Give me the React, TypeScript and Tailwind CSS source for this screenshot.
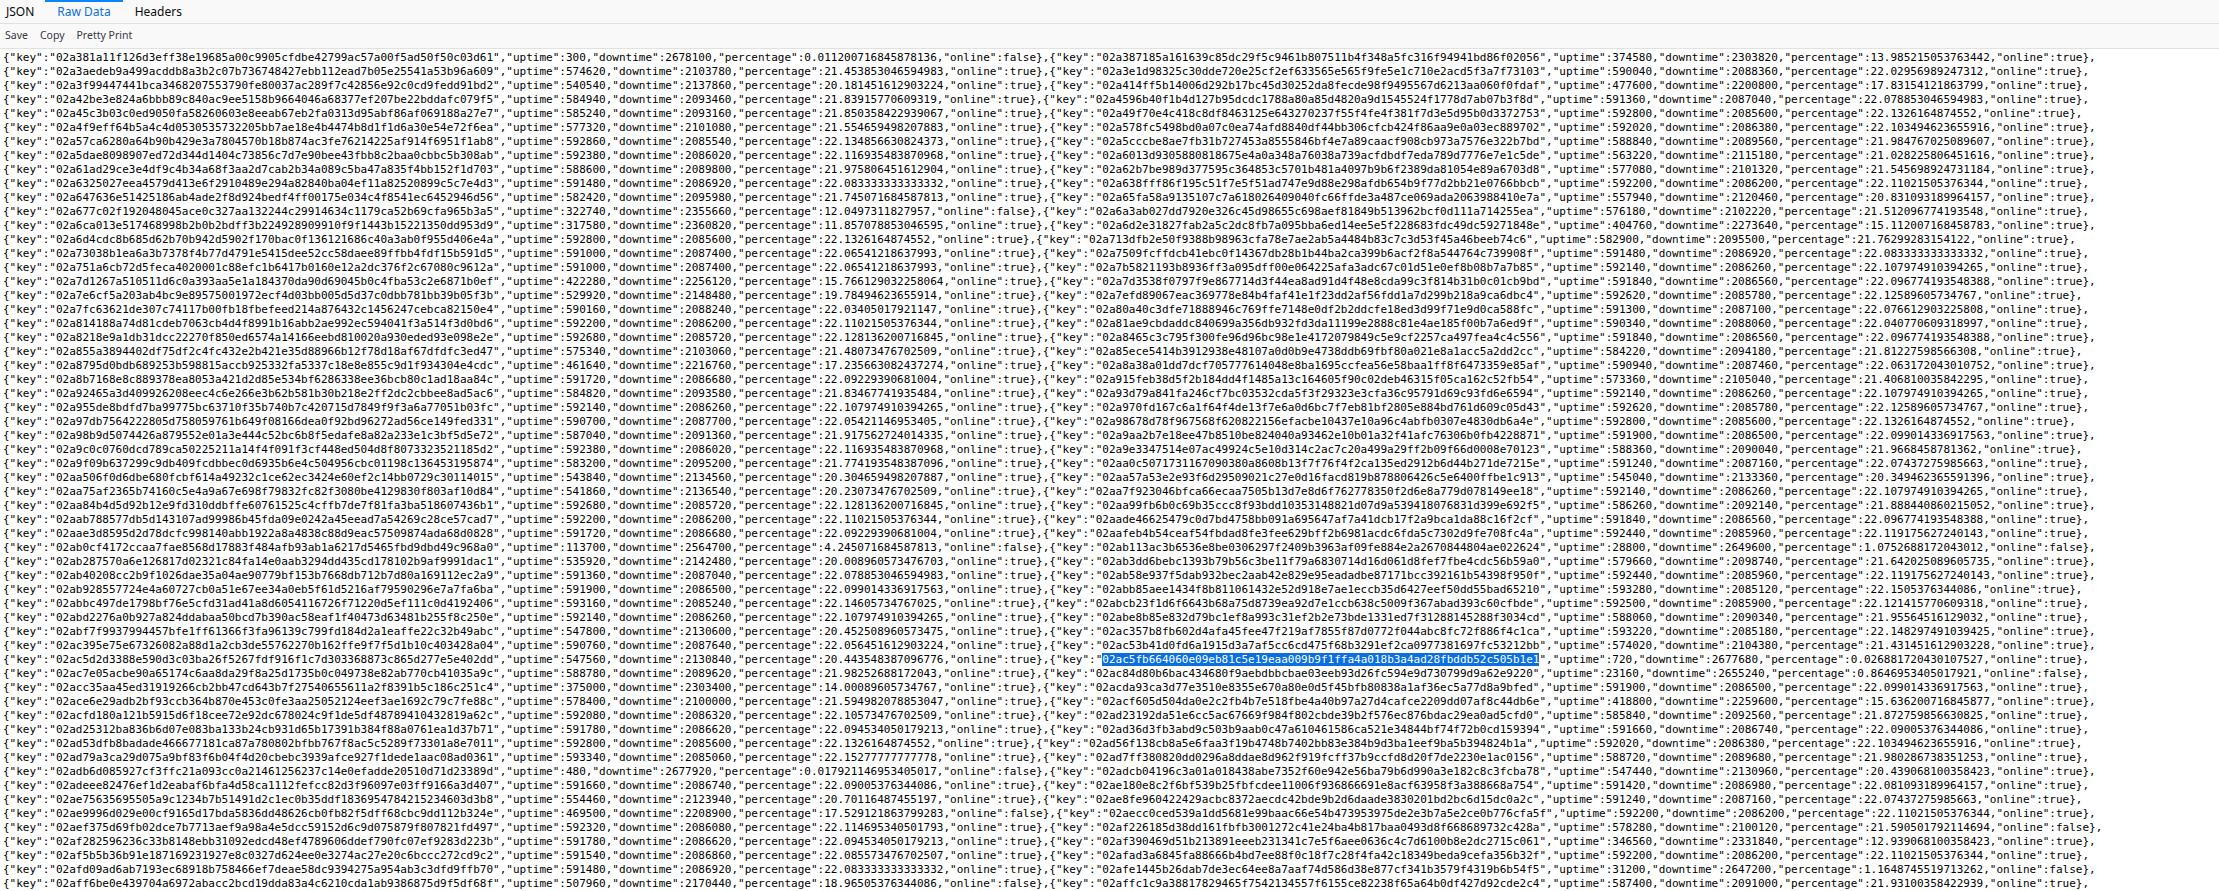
const SEL = "02ac5fb664060e09eb81c5e19eaa009b9f1ffa4a018b3a4ad28fbddb52c505b1e1";

const RAW = `02a381a11f126d3eff38e19685a00c9905cfdbe42799ac57a00f5ad50f50c03d61 300 2678100 0.011200716845878136 false 02a387185a161639c85dc29f5c9461b807511b4f348a5fc316f94941bd86f02056 374580 2303820 13.985215053763442 true
02a3aedeb9a499acddb8a3b2c07b736748427ebb112ead7b05e25541a53b96a609 574620 2103780 21.453853046594983 true 02a3e1d98325c30dde720e25cf2ef633565e565f9fe5e1c710e2acd5f3a7f73103 590040 2088360 22.02956989247312 true
02a3f99447441bca3468207553790fe80037ac289f7c42856e92c0cd9fedd91bd2 540540 2137860 20.181451612903224 true 02a414ff5b14006d292b17bc45d30252da8fecde98f9495567d6213aa060f0fdaf 477600 2200800 17.83154121863799 true
02a42be3e824a6bbb89c840ac9ee5158b9664046a68377ef207be22bddafc079f5 584940 2093460 21.83915770609319 true 02a4596b40f1b4d127b95dcdc1788a80a85d4820a9d1545524f1778d7ab07b3f8d 591360 2087040 22.078853046594983 true
02a45c3b03c0ed9050fa58260603e8eeab67eb2fa0313d95abf86af069188a27e7 585240 2093160 21.850358422939067 true 02a49f70e4c418c8df8463125e643270237f55f4fe4f381f7d3e5d95b0d3372753 592800 2085600 22.1326164874552 true
02a4f9eff64b5a4c4d0530535732205bb7ae18e4b4474b8d1f1d6a30e54e72f6ea 577320 2101080 21.554659498207883 true 02a578fc5498bd0a07c0ea74afd8840df44bb306cfcb424f86aa9e0a03ec889702 592020 2086380 22.103494623655916 true
02a57ca6280a64b90b429e3a7804570b18b874ac3fe76214225af914f6951f1ab8 592860 2085540 22.134856630824373 true 02a5cccbe8ae7fb31b727453a8555846bf4e7a89caacf908cb973a7576e322b7bd 588840 2089560 21.984767025089607 true
02a5dae8098907ed72d344d1404c73856c7d7e90bee43fbb8c2baa0cbbc5b308ab 592380 2086020 22.116935483870968 true 02a6013d9305880818675e4a0a348a76038a739acfdbdf7eda789d7776e7e1c5de 563220 2115180 21.028225806451616 true
02a61ad29ce3e4df9c4b34a68f3aa2d7cab2b34a089c5ba47a835f4bb152f1d703 588600 2089800 21.975806451612904 true 02a62b7be989d377595c364853c5701b481a4097b9b6f2389da81054e89a6703d8 577080 2101320 21.545698924731184 true
02a6325027eea4579d413e6f2910489e294a82840ba04ef11a82520899c5c7e4d3 591480 2086920 22.083333333333332 true 02a638fff86f195c51f7e5f51ad747e9d88e298afdb654b9f77d2bb21e0766bbcb 592200 2086200 22.11021505376344 true
02a647636e51425186ab4ade2f8d924bedf4ff00175e034c4f8541ec6452946d56 582420 2095980 21.745071684587813 true 02a65fa58a9135107c7a618026409040fc66ffde3a487ce069ada2063988410e7a 557940 2120460 20.831093189964157 true
02a677c02f192048045ace0c327aa132244c29914634c1179ca52b69cfa965b3a5 322740 2355660 12.0497311827957 false 02a6a3ab027dd7920e326c45d98655c698aef81849b513962bcf0d111a714255ea 576180 2102220 21.512096774193548 true
02a6ca013e517468998b2b0b2bdff3b224928909910f9f1443b15221350dd953d9 317580 2360820 11.857078853046595 true 02a6d2e31827fab2a5c2dc8fb7a095bba6ed14ee5e5f228683fdc49dc59271848e 404760 2273640 15.112007168458783 true
02a6d4cdc8b685d62b70b942d5902f170bac0f136121686c40a3ab0f955d406e4a 592800 2085600 22.1326164874552 true 02a713dfb2e50f9388b98963cfa78e7ae2ab5a4484b83c7c3d53f45a46beeb74c6 582900 2095500 21.76299283154122 true
02a73038b1ea6a3b7378f4b77d4791e5415dee52cc58daee89ffbb4fdf15b591d5 591000 2087400 22.06541218637993 true 02a7509fcffdcb41ebc0f14367db28b1b44ba2ca399b6acf2f8a544764c739908f 591480 2086920 22.083333333333332 true
02a751a6cb72d5feca4020001c88efc1b6417b0160e12a2dc376f2c67080c9612a 591000 2087400 22.06541218637993 true 02a7b5821193b8936ff3a095dff00e064225afa3adc67c01d51e0ef8b08b7a7b85 592140 2086260 22.107974910394265 true
02a7d1267a510511d6c0a393aa5e1a184370da90d69045b0c4fba53c2e6871b0ef 422280 2256120 15.766129032258064 true 02a7d3538f0797f9e867714d3f44ea8ad91d4f48e8cda99c3f814b31b0c01cb9bd 591840 2086560 22.096774193548388 true
02a7e6cf5a203ab4bc9e89575001972ecf4d03bb005d5d37c0dbb781bb39b05f3b 529920 2148480 19.78494623655914 true 02a7efd89067eac369778e84b4faf41e1f23dd2af56fdd1a7d299b218a9ca6dbc4 592620 2085780 22.12589605734767 true
02a7fc63621de307c74117b00fb18fbefeed214a876432c1456247cebca82150e4 590160 2088240 22.03405017921147 true 02a80a40c3dfe71888946c769ffe7148e0df2b2ddcfe18ed3d99f71e9d0ca588fc 591300 2087100 22.076612903225808 true
02a814188a74d81cdeb7063cb4d4f8991b16abb2ae992ec594041f3a514f3d0bd6 592200 2086200 22.11021505376344 true 02a81ae9cbdaddc840699a356db932fd3da11199e2888c81e4ae185f00b7a6ed9f 590340 2088060 22.040770609318997 true
02a8218e9a1db31dcc22270f850ed6574a14166eebd810020a930eded93e098e2e 592680 2085720 22.128136200716845 true 02a8465c3c795f300fe96d96bc98e1e4172079849c5e9cf2257ca497fea4c4c556 591840 2086560 22.096774193548388 true
02a855a3894402df75df2c4fc432e2b421e35d88966b12f78d18af67dfdfc3ed47 575340 2103060 21.48073476702509 true 02a85ece5414b3912938e48107a0d0b9e4738ddb69fbf80a021e8a1acc5a2dd2cc 584220 2094180 21.81227598566308 true
02a8795d0bdb689253b598815accb925332fa5337c18e8e855c9d1f934304e4cdc 461640 2216760 17.235663082437274 true 02a8a38a01dd7dcf705777614048e8ba1695ccfea56e58baa1ff8f6473359e85af 590940 2087460 22.063172043010752 true
02a8b7168e8c889378ea8053a421d2d85e534bf6286338ee36bcb80c1ad18aa84c 591720 2086680 22.09229390681004 true 02a915feb38d5f2b184dd4f1485a13c164605f90c02deb46315f05ca162c52fb54 573360 2105040 21.406810035842295 true
02a92465a3d409926208eec4c6e266e3b62b581b30b218e2ff2dc2cbbee8ad5ac6 584820 2093580 21.83467741935484 true 02a93d79a841fa246cf7bc03532cda5f3f29323e3cfa36c95791d69c93fd6e6594 592140 2086260 22.107974910394265 true
02a955de8bdfd7ba99775bc63710f35b740b7c420715d7849f9f3a6a77051b03fc 592140 2086260 22.107974910394265 true 02a970fd167c6a1f64f4de13f7e6a0d6bc7f7eb81bf2805e884bd761d609c05d43 592620 2085780 22.12589605734767 true
02a97db7564222805d758059761b649f08166dea0f92bd96272ad56ce149fed331 590700 2087700 22.05421146953405 true 02a98678d78f967568f620822156efacbe10437e10a96c4abfb0307e4830db6a4e 592800 2085600 22.1326164874552 true
02a98b9d5074426a879552e01a3e444c52bc6b8f5edafe8a82a233e1c3bf5d5e72 587040 2091360 21.917562724014335 true 02a9aa2b7e18ee47b8510be824040a93462e10b01a32f41afc76306b0fb4228871 591900 2086500 22.099014336917563 true
02a9c0c0760dcd789ca50225211a14f4f091f3cf448ed504d8f8073323521185d2 592380 2086020 22.116935483870968 true 02a9e3347514e07ac49924c5e10d314c2ac7c20a499a29ff2b09f66d0008e70123 588360 2090040 21.9668458781362 true
02a9f09b637299c9db409fcdbbec0d6935b6e4c504956cbc01198c136453195874 583200 2095200 21.774193548387096 true 02aa0c5071731167090380a8608b13f7f76f4f2ca135ed2912b6d44b271de7215e 591240 2087160 22.07437275985663 true
02aa506f0d6dbe680fcbf614a49232c1ce62ec3424e60ef2c14bb0729c30114015 543840 2134560 20.304659498207887 true 02aa57a53e2e93f6d29509021c27e0d16facd819b878806426c5e6400ffbe1c913 545040 2133360 20.349462365591396 true
02aa75af2365b74160c5e4a9a67e698f79832fc82f3080be4129830f803af10d84 541860 2136540 20.23073476702509 true 02aa7f923046bfca66ecaa7505b13d7e8d6f762778350f2d6e8a779d078149ee18 592140 2086260 22.107974910394265 true
02aa84b4d5d92b12e9fd310ddbffe60761525c4cffb7de7f81fa3ba518607436b1 592680 2085720 22.128136200716845 true 02aa99fb6b0c69b35ccc8f93bdd10353148821d07d9a539418076831d399e692f5 586260 2092140 21.888440860215052 true
02aab788577db5d143107ad99986b45fda09e0242a45eead7a54269c28ce57cad7 592200 2086200 22.11021505376344 true 02aade46625479c0d7bd4758bb091a695647af7a41dcb17f2a9bca1da88c16f2cf 591840 2086560 22.096774193548388 true
02aae3d8595d2d78dcfc998140abb1922a8a4838c88d9eac57509874ada68d0828 591720 2086680 22.09229390681004 true 02aafeb4b54ceaf54fbdad8fe3fee629bff2b6981acdc6fda5c7302d9fe708fc4a 592440 2085960 22.119175627240143 true
02ab0cf4172ccaa7fae8568d17883f484afb93ab1a6217d5465fbd9dbd49c968a0 113700 2564700 4.245071684587813 false 02ab113ac3b6536e8be0306297f2409b3963af09fe884e2a2670844804ae022624 28800 2649600 1.0752688172043012 false
02ab287570a6e126817d02321c84fa14e0aab3294dd435cd178102b9af9991dac1 535920 2142480 20.008960573476703 true 02ab3dd6bebc1393b79b56c3be11f79a6830714d16d061d8fef7fbe4cdc56b59a0 579660 2098740 21.642025089605735 true
02ab40208cc2b9f1026dae35a04ae90779bf153b7668db712b7d80a169112ec2a9 591360 2087040 22.078853046594983 true 02ab58e937f5dab932bec2aab42e829e95eadadbe87171bcc392161b54398f950f 592440 2085960 22.119175627240143 true
02ab928557724e4a60727cb0a51e67ee34a0eb5f61d5216af79590296e7a7fa6ba 591900 2086500 22.099014336917563 true 02abb85aee1434f8b811061432e52d918e7ae1eccb35d6427eef50dd55bad65210 593280 2085120 22.1505376344086 true
02abbc497de1798bf76e5cfd31ad41a8d6054116726f71220d5ef111c0d4192406 593160 2085240 22.14605734767025 true 02abcb23f1d6f6643b68a75d8739ea92d7e1ccb638c5009f367abad393c60cfbde 592500 2085900 22.121415770609318 true
02abd2276a0b927a824ddabaa50bcd7b390ac58eaf1f40473d63481b255f8c250e 592140 2086260 22.107974910394265 true 02abe8b85e832d79bc1ef8a993c31ef2b2e73bde1331ed7f31288145288f3034cd 588060 2090340 21.95564516129032 true
02abf7f9937994457bfe1ff61366f3fa96139c799fd184d2a1eaffe22c32b49abc 547800 2130600 20.452508960573475 true 02ac357b8fb602d4afa45fee47f219af7855f87d0772f044abc8fc72f886f4c1ca 593220 2085180 22.148297491039425 true
02ac395e75e67326082a88d1a2cb3de55762270b162ffe9f7f5d1b10c403428a04 590760 2087640 22.056451612903224 true 02ac53b41d0fd6a1915d3a7af5cc6cd475f68b3291ef2ca0977381697fc53212bb 574020 2104380 21.431451612903228 true
02ac5d2d3388e590d3c03ba26f5267fdf916f1c7d303368873c865d277e5e402dd 547560 2130840 20.443548387096776 true 02ac5fb664060e09eb81c5e19eaa009b9f1ffa4a018b3a4ad28fbddb52c505b1e1 720 2677680 0.026881720430107527 true
02ac7e05acbe90a65174c6aa8da29f8a25d1735b0c049738e82ab770cb41035a9c 588780 2089620 21.98252688172043 true 02ac84d80b6bac434680f9aebdbbcbae03eeb93d26fc594e9d730799d9a62e9220 23160 2655240 0.8646953405017921 false
02acc35aa45ed31919266cb2bb47cd643b7f27540655611a2f8391b5c186c251c4 375000 2303400 14.00089605734767 true 02acda93ca3d77e3510e8355e670a80e0d5f45bfb80838a1af36ec5a77d8a9bfed 591900 2086500 22.099014336917563 true
02ace6e29adb2bf93ccb364b870e453c0fe3aa25052124eef3ae1692c79c7fe88c 578400 2100000 21.594982078853047 true 02acf605d504da0e2c2fb4b7e518fbe4a40b97a27d4cafce2209dd07af8c44db6e 418800 2259600 15.636200716845877 true
02acfd180a121b5915d6f18cee72e92dc678024c9f1de5df48789410432819a62c 592080 2086320 22.10573476702509 true 02ad23192da51e6cc5ac67669f984f802cbde39b2f576ec876bdac29ea0ad5cfd0 585840 2092560 21.872759856630825 true
02ad25312ba836b6d07e083ba133b24cb931d65b17391b384f88a0761ea1d37b71 591780 2086620 22.094534050179213 true 02ad36d3fb3abd9c503b9aab0c47a610461586ca521e34844bf74f72b0cd159394 591660 2086740 22.09005376344086 true
02ad53dfb8badade466677181ca87a780802bfbb767f8ac5c5289f73301a8e7011 592800 2085600 22.1326164874552 true 02ad56f138cb8a5e6faa3f19b4748b7402bb83e384b9d3ba1eef9ba5b394824b1a 592020 2086380 22.103494623655916 true
02ad79a3ca29d075a9bf83f6b04f4d20cbebc3939afce927f1dede1aac08ad0361 593340 2085060 22.15277777777778 true 02ad7ff380820dd0296a8ddae8d962f919fcff37b9ccfd8d20f7de2230e1ac0156 588720 2089680 21.980286738351253 true
02adb6d085927cf3ffc21a093cc0a21461256237c14e0efadde20510d71d23389d 480 2677920 0.017921146953405017 false 02adcb04196c3a01a018438abe7352f60e942e56ba79b6d990a3e182c8c3fcba78 547440 2130960 20.439068100358423 true
02adeee82476ef1d2eabaf6bfa4d58ca1112fefcc82d3f96097e03ff9166a3d407 591660 2086740 22.09005376344086 true 02ae180e8c2f6bf539b25fbfcdee11006f936866691e8acf63958f3a388668a754 591420 2086980 22.081093189964157 true
02ae75635695505a9c1234b7b51491d2c1ec0b35ddf1836954784215234603d3b8 554460 2123940 20.70116487455197 true 02ae8fe960422429acbc8372aecdc42bde9b2d6daade3830201bd2bc6d15dc0a2c 591240 2087160 22.07437275985663 true
02ae9996d029e00cf9165d17bda5836dd48626cb0fb82f5dff68cbc9dd112b324e 469500 2208900 17.529121863799283 false 02aecc0ced539a1dd5681e99baac66e54b473953975de2e3b7a5e2ce0b776cfa5f 592200 2086200 22.11021505376344 true
02aef375d69fb02dce7b7713aef9a98a4e5dcc59152d6c9d075879f807821fd497 592320 2086080 22.114695340501793 true 02af226185d38dd161fbfb3001272c41e24ba4b817baa0493d8f668689732c428a 578280 2100120 21.590501792114694 false
02af282596236c33b8148ebb31092edcd48ef4789606ddef790fc07ef9283d223b 591780 2086620 22.094534050179213 true 02af390469d51b213891eeeb231341c7e5f6aee0636c4c7d6100b8e2dc2715c061 346560 2331840 12.939068100358423 true
02af5b5b36b91e187169231927e8c0327d624ee0e3274ac27e20c6bccc272cd9c2 591540 2086860 22.085573476702507 true 02afad3a6845fa88666b4bd7ee88f0c18f7c28f4fa42c18349beda9cefa356b32f 592200 2086200 22.11021505376344 true
02afd09ad6ab7193ec68918b758466ef7deae58dc9394275a954ab3c3dfd9ffb70 591480 2086920 22.083333333333332 true 02afe1445b26dab7de3ec64ee8a7aaf74d586d38e877cf341b3579f4319b6b54f5 31200 2647200 1.1648745519713262 false
02aff6be0e439704a6972abacc2bcd19dda83a4c6210cda1ab9386875d9f5df68f 507960 2170440 18.96505376344086 false 02affc1c9a38817829465f7542134557f6155ce82238f65a64b0df427d92cde2c4 587400 2091000 21.93100358422939 true`;

const CLIPPED_LINE =
  '{"key":"02a37f5c1e8d20b94a6713fe08cd2b596e7a14c3d8f02b6e95a17c4d38ef0b126a","uptime":592140,"downtime":2086260,"percentage":22.107974910394265,"online":true},{"key":"02a380c94de17b2f6a53081cfe79d24b60a8e13f5c7d92b4068ea1f35c7d20b894","uptime":591840,"downtime":2086560,"percentage":22.096774193548388,"online":true},';

function toLine(raw: string): string {
  const p = raw.split(" ");
  const obj = (o: number) =>
    `{"key":"${p[o]}","uptime":${p[o + 1]},"downtime":${p[o + 2]},"percentage":${p[o + 3]},"online":${p[o + 4]}},`;
  return obj(0) + obj(5);
}

const LINES = RAW.split("\n").map(toLine);

function RawLine({ text }: { text: string }) {
  const i = text.indexOf(SEL);
  if (i < 0) return <div className="h-[14px] leading-[14px] whitespace-pre">{text}</div>;
  return (
    <div className="h-[14px] leading-[14px] whitespace-pre">
      {text.slice(0, i)}
      <span className="bg-[#0a6fdf] text-white">{SEL}</span>
      {text.slice(i + SEL.length)}
    </div>
  );
}

export default function App() {
  return (
    <div className="flex h-[891px] w-full flex-col overflow-hidden bg-white text-black">
      <div className="flex h-[24px] shrink-0 items-stretch border-b border-[#e1e1e2] bg-[#f9f9fa] font-['Noto_Sans',sans-serif] text-[12px] text-[#0c0c0d]">
        <div className="flex items-center pl-[6px] pr-[11px]">JSON</div>
        <div className="flex items-center border-t-2 border-[#0a84ff] px-[12px] pb-[2px] text-[#0a6fdf]">Raw Data</div>
        <div className="flex items-center px-[12px]">Headers</div>
      </div>
      <div className="flex h-[25px] shrink-0 items-center gap-[12px] border-b border-[#e1e1e2] bg-[#f9f9fa] pl-[5px] font-['Noto_Sans',sans-serif] text-[10.5px] text-[#38383d]">
        <span>Save</span>
        <span>Copy</span>
        <span>Pretty Print</span>
      </div>
      <div className="min-h-0 flex-1 overflow-hidden pl-[3px] font-['DejaVu_Sans_Mono',monospace] text-[11px]">
        <div className="mt-[-12px]">
          <RawLine text={CLIPPED_LINE} />
          {LINES.map((l, i) => (
            <RawLine key={i} text={l} />
          ))}
        </div>
      </div>
    </div>
  );
}
